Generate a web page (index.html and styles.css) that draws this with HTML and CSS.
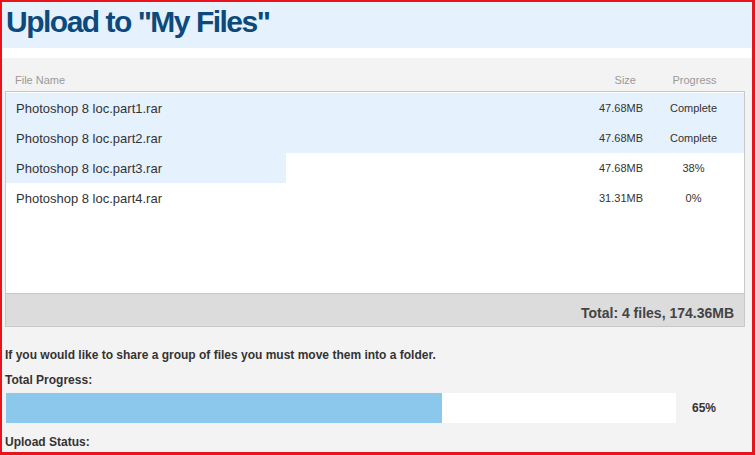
FILE: index.html
```html
<!DOCTYPE html>
<html lang="en">
<head>
  <meta charset="UTF-8">
  <title>Upload to "My Files"</title>
  <link rel="stylesheet" href="styles.css">
</head>
<body>
  <div class="frame">
    <div class="title-bar">
      <h1>Upload to "My Files"</h1>
    </div>
    <div class="panel">
      <div class="cols">
        <span class="c-name">File Name</span>
        <span class="c-size">Size</span>
        <span class="c-prog">Progress</span>
      </div>
      <div class="file-box">
        <div class="rows">
          <div class="row" style="--p:100%"><span class="c-name">Photoshop 8 loc.part1.rar</span><span class="c-size">47.68MB</span><span class="c-prog">Complete</span></div>
          <div class="row" style="--p:100%"><span class="c-name">Photoshop 8 loc.part2.rar</span><span class="c-size">47.68MB</span><span class="c-prog">Complete</span></div>
          <div class="row" style="--p:38%"><span class="c-name">Photoshop 8 loc.part3.rar</span><span class="c-size">47.68MB</span><span class="c-prog">38%</span></div>
          <div class="row" style="--p:0%"><span class="c-name">Photoshop 8 loc.part4.rar</span><span class="c-size">31.31MB</span><span class="c-prog">0%</span></div>
        </div>
        <div class="total">Total: 4 files, 174.36MB</div>
      </div>

      <p class="note">If you would like to share a group of files you must move them into a folder.</p>
      <p class="label">Total Progress:</p>
      <div class="progress">
        <div class="track"><div class="fill" style="width:65%"></div></div>
        <span class="pct">65%</span>
      </div>
      <p class="label">Upload Status:</p>
    </div>
  </div>
</body>
</html>
```

FILE: styles.css
```css
html, body {
  margin: 0;
  padding: 0;
  background: #fff;
}
body {
  font-family: 'Liberation Sans', Arial, sans-serif;
  color: #333;
}
.frame {
  box-sizing: border-box;
  width: 755px;
  height: 455px;
  border: solid #e8141b;
  border-width: 2px 3px 3px 2px;
  background: #fff;
  overflow: hidden;
}
.title-bar {
  background: #e5f1fd;
  height: 46px;
  padding-left: 4px;
}
h1 {
  margin: 0;
  font-size: 30px;
  line-height: 40px;
  font-weight: bold;
  color: #0c4a7c;
  letter-spacing: -1.5px;
}
.panel {
  margin-top: 10px;
  background: #f3f3f3;
  height: 400px;
  padding: 0 7px 0 3px;
}
.cols, .row {
  display: flex;
  align-items: center;
}
.cols {
  height: 33px;
  padding-top: 11px;
  box-sizing: border-box;
  font-size: 11px;
  color: #999;
}
.c-name {
  flex: 1;
  padding-left: 10px;
}
.c-size {
  width: 80px;
  text-align: right;
}
.c-prog {
  width: 101px;
  text-align: center;
}
.cols .c-size {
  padding-right: 2px;
}
.cols .c-prog {
  padding-left: 6px;
}
.file-box {
  border: 1px solid #c8c8c8;
  background: #fff;
}
.rows {
  height: 200px;
  padding-top: 1px;
}
.row {
  height: 30px;
  background: linear-gradient(to right, #e5f1fd var(--p), transparent var(--p));
  font-size: 11px;
}
.row .c-name {
  font-size: 13px;
}
.total {
  border-top: 1px solid #c8c8c8;
  background: #dcdcdc;
  height: 32px;
  line-height: 38px;
  text-align: right;
  padding-right: 10px;
  font-size: 14px;
  font-weight: bold;
  color: #444;
}
.note, .label {
  margin: 0;
  font-size: 12px;
  font-weight: bold;
  color: #333;
}
.note {
  margin-top: 21px;
}
.label {
  margin-top: 11px;
}
.progress {
  display: flex;
  align-items: center;
  margin-top: 6px;
  padding-left: 1px;
}
.track {
  width: 670px;
  height: 30px;
  background: #fff;
}
.fill {
  height: 100%;
  background: #8bc8ec;
}
.pct {
  margin-left: 16px;
  font-size: 12px;
  font-weight: bold;
}
.progress + .label {
  margin-top: 12px;
}
```
